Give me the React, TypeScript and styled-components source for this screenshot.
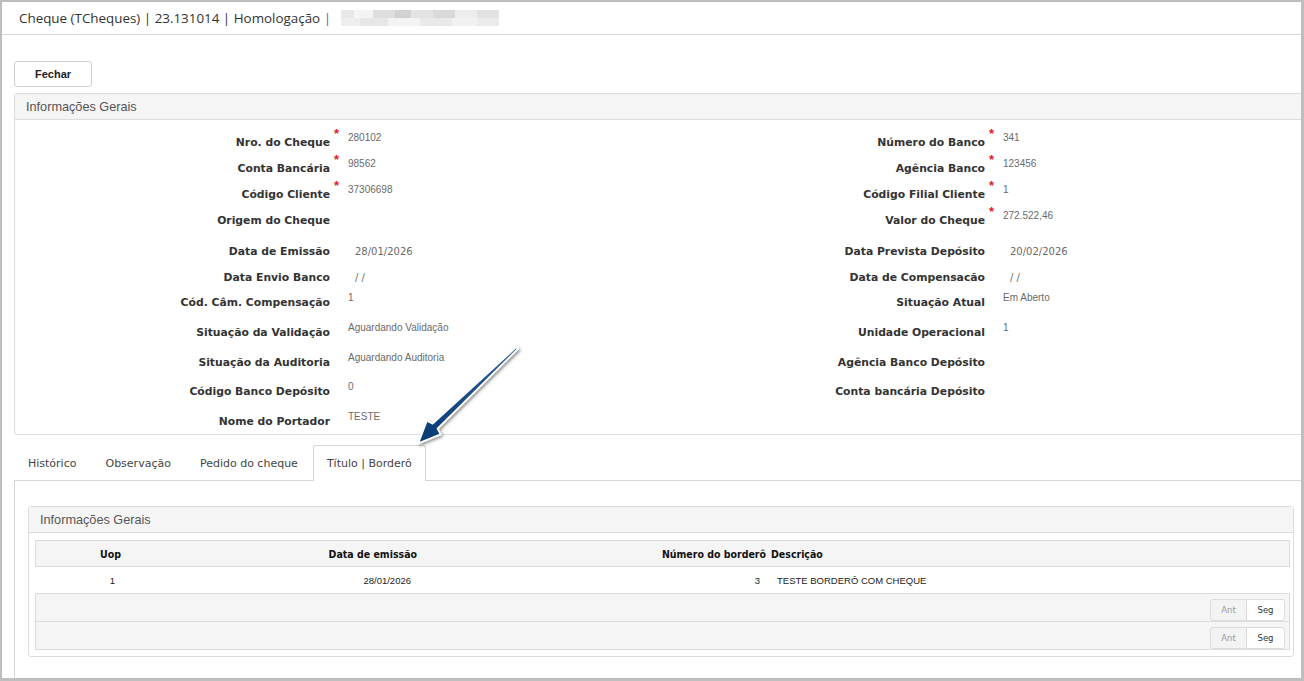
import React from "react";
import styled, { createGlobalStyle } from "styled-components";

const GlobalStyle = createGlobalStyle`
  html, body { margin: 0; padding: 0; background: #fff; }
  body { font-family: "DejaVu Sans", Verdana, sans-serif; }
  * { box-sizing: border-box; }
`;

const Frame = styled.div`
  position: relative;
  width: 1304px;
  height: 681px;
  border: 2px solid #bebebe;
  border-right-width: 3px;
  border-bottom-width: 3px;
  overflow: hidden;
  background: #fff;
`;

const TitleBar = styled.div`
  height: 33px;
  border-bottom: 1px solid #d8d8d8;
  display: flex;
  align-items: center;
  padding-left: 17px;
  font-family: "Open Sans", "Liberation Sans", sans-serif;
  font-size: 13.4px;
  color: #333;
  white-space: pre;
`;

const TitleSep = styled.span`
  color: #3f6fa8;
`;

const Blurred = styled.div`
  width: 158px;
  height: 16px;
  margin-left: 10px;
  background:
    linear-gradient(to right, #e8e8e8 0 8%, #f4f4f4 8% 20%, #dedede 20% 34%, #d2d2d2 34% 44%, #e3e3e3 44% 58%, #d9d9d9 58% 72%, #ededed 72% 86%, #e2e2e2 86% 100%) top / 100% 50% no-repeat,
    linear-gradient(to right, #eeeeee 0 12%, #e7e7e7 12% 30%, #f3f3f3 30% 50%, #e9e9e9 50% 70%, #f1f1f1 70% 86%, #ebebeb 86% 100%) bottom / 100% 50% no-repeat;
  filter: blur(0.7px);
`;

const Toolbar = styled.div`
  padding: 26px 0 0 12px;
  display: flex;
`;

const Button = styled.button`
  width: 78px;
  height: 26px;
  border: 1px solid #cfcfcf;
  border-radius: 3px;
  background: #fff;
  font-family: "Liberation Sans", Arial, sans-serif;
  font-weight: bold;
  font-size: 11px;
  color: #222;
  padding: 0;
`;

const Panel = styled.section<{ $inner?: boolean }>`
  border: 1px solid #dcdcdc;
  border-radius: 3px;
  background: #fff;
  margin: ${(p) => (p.$inner ? "0" : "6px -4px 0 12px")};
`;

const PanelHeader = styled.div`
  height: 26px;
  border-bottom: 1px solid #dcdcdc;
  background: #f5f5f5;
  display: flex;
  align-items: center;
  padding-left: 11px;
  font-family: "Liberation Sans", Arial, sans-serif;
  font-size: 12.7px;
  color: #555;
`;

const FieldsBody = styled.div`
  padding: 4px 0 5px 0;
`;

const FieldRow = styled.div<{ $h: number }>`
  display: grid;
  grid-template-columns: 315px 18px 309px 328px 18px 1fr;
  height: ${(p) => p.$h}px;
`;

const Label = styled.div`
  align-self: end;
  text-align: right;
  line-height: 16px;
  font-family: "DejaVu Sans", Verdana, sans-serif;
  font-weight: bold;
  font-size: 10.8px;
  color: #333;
  white-space: nowrap;
  transform: translateY(1px);
`;

const Req = styled.div`
  align-self: end;
  margin-bottom: 11px;
  padding-left: 4px;
  line-height: 10px;
  height: 10px;
  font-family: "Liberation Sans", Arial, sans-serif;
  font-size: 13px;
  font-weight: bold;
  color: #e01818;
`;

const Value = styled.div<{ $date?: boolean }>`
  align-self: end;
  white-space: nowrap;
  color: #6a6a6a;
  ${(p) =>
    p.$date
      ? `font-family: "DejaVu Sans", Verdana, sans-serif; font-size: 10px; line-height: 16px; padding-left: 7px; transform: translateY(1px);`
      : `font-family: "Liberation Sans", Arial, sans-serif; font-size: 10px; line-height: 12px; margin-bottom: 6px;`}
`;

const TabBar = styled.div`
  display: flex;
  margin: 10px 0 0 12px;
  position: relative;
  z-index: 1;
`;

const Tab = styled.div<{ $active?: boolean }>`
  height: 36px;
  padding: 0 13px 1px;
  margin-right: 1px;
  margin-bottom: -1px;
  display: flex;
  align-items: center;
  border: 1px solid ${(p) => (p.$active ? "#d6d6d6" : "transparent")};
  border-bottom: none;
  border-radius: 3px 3px 0 0;
  background: ${(p) => (p.$active ? "#fff" : "transparent")};
  font-family: "DejaVu Sans", Verdana, sans-serif;
  font-size: 11px;
  color: #444;
  white-space: nowrap;
`;

const TabContent = styled.div`
  margin-left: 12px;
  border-left: 1px solid #d6d6d6;
  border-top: 1px solid #d6d6d6;
  padding: 25px 7px 40px 13px;
`;

const InnerBody = styled.div`
  padding: 7px 3px 6px 6px;
`;

const GridRow = styled.div<{ $head?: boolean }>`
  display: grid;
  grid-template-columns: 87px 296px 349px 1fr;
  height: 27px;
  border: 1px solid ${(p) => (p.$head ? "#dcdcdc" : "transparent")};
  border-bottom: 1px solid #dcdcdc;
  background: ${(p) => (p.$head ? "#f5f5f5" : "#fff")};
  align-items: center;
`;

const HeadCell = styled.div<{ $left?: boolean }>`
  text-align: ${(p) => (p.$left ? "left" : "right")};
  padding: ${(p) => (p.$left ? "0 0 0 3px" : "0 2px 0 0")};
  font-family: "DejaVu Sans Condensed", "DejaVu Sans", sans-serif;
  font-weight: bold;
  font-size: 10.5px;
  color: #111;
  white-space: nowrap;
`;

const Cell = styled.div<{ $left?: boolean }>`
  text-align: ${(p) => (p.$left ? "left" : "right")};
  padding: ${(p) => (p.$left ? "0 0 0 9px" : "0 8px 0 0")};
  font-family: "Liberation Sans", Arial, sans-serif;
  font-size: 9.5px;
  color: #222;
  white-space: nowrap;
`;

const PagerRow = styled.div`
  height: 28px;
  border: 1px solid #dcdcdc;
  border-top: none;
  background: #f5f5f5;
  display: flex;
  justify-content: flex-end;
  align-items: flex-end;
  padding-right: 4px;
`;

const PagerGroup = styled.div`
  display: flex;
  height: 22px;
`;

const PagerBtn = styled.div<{ $disabled?: boolean }>`
  width: ${(p) => (p.$disabled ? 37 : 38)}px;
  height: 22px;
  display: flex;
  align-items: center;
  justify-content: center;
  border: 1px solid #dcdcdc;
  ${(p) => (p.$disabled ? "" : "border-left: none;")}
  border-radius: ${(p) => (p.$disabled ? "3px 0 0 3px" : "0 3px 3px 0")};
  background: ${(p) => (p.$disabled ? "#f3f3f3" : "#fff")};
  color: ${(p) => (p.$disabled ? "#9a9a9a" : "#333")};
  font-family: "DejaVu Sans", Verdana, sans-serif;
  font-size: 8.5px;
`;

const ArrowSvg = styled.svg`
  position: absolute;
  left: 398px;
  top: 333px;
  overflow: visible;
  z-index: 5;
`;

type Side = { label: string; value?: string; req?: boolean; date?: boolean };
type Row = { h: number; l: Side; r?: Side };

const rows: Row[] = [
  { h: 26, l: { label: "Nro. do Cheque", value: "280102", req: true }, r: { label: "Número do Banco", value: "341", req: true } },
  { h: 26, l: { label: "Conta Bancária", value: "98562", req: true }, r: { label: "Agência Banco", value: "123456", req: true } },
  { h: 26, l: { label: "Código Cliente", value: "37306698", req: true }, r: { label: "Código Filial Cliente", value: "1", req: true } },
  { h: 26, l: { label: "Origem do Cheque" }, r: { label: "Valor do Cheque", value: "272.522,46", req: true } },
  { h: 31, l: { label: "Data de Emissão", value: "28/01/2026", date: true }, r: { label: "Data Prevista Depósito", value: "20/02/2026", date: true } },
  { h: 26, l: { label: "Data Envio Banco", value: "/ /", date: true }, r: { label: "Data de Compensacão", value: "/ /", date: true } },
  { h: 25, l: { label: "Cód. Câm. Compensação", value: "1" }, r: { label: "Situação Atual", value: "Em Aberto" } },
  { h: 30, l: { label: "Situação da Validação", value: "Aguardando Validação" }, r: { label: "Unidade Operacional", value: "1" } },
  { h: 30, l: { label: "Situação da Auditoria", value: "Aguardando Auditoria" }, r: { label: "Agência Banco Depósito" } },
  { h: 29, l: { label: "Código Banco Depósito", value: "0" }, r: { label: "Conta bancária Depósito" } },
  { h: 30, l: { label: "Nome do Portador", value: "TESTE" } },
];

const FieldCells: React.FC<{ s?: Side }> = ({ s }) => (
  <>
    <Label>{s?.label ?? ""}</Label>
    {s?.req ? <Req>*</Req> : <div />}
    <Value $date={s?.date}>{s?.value ?? ""}</Value>
  </>
);

const tabs = ["Histórico", "Observação", "Pedido do cheque", "Título | Borderô"];

export default function App() {
  return (
    <>
      <GlobalStyle />
      <Frame>
        <TitleBar>
          <span>Cheque (TCheques) | 23.131014 | Homologação </span>
          <TitleSep>|</TitleSep>
          <Blurred />
        </TitleBar>
        <Toolbar>
          <Button>Fechar</Button>
        </Toolbar>
        <Panel>
          <PanelHeader>Informações Gerais</PanelHeader>
          <FieldsBody>
            {rows.map((r, i) => (
              <FieldRow key={i} $h={r.h}>
                <FieldCells s={r.l} />
                <FieldCells s={r.r} />
              </FieldRow>
            ))}
          </FieldsBody>
        </Panel>
        <TabBar>
          {tabs.map((t, i) => (
            <Tab key={t} $active={i === 3}>
              {t}
            </Tab>
          ))}
        </TabBar>
        <TabContent>
          <Panel $inner>
            <PanelHeader>Informações Gerais</PanelHeader>
            <InnerBody>
              <GridRow $head>
                <HeadCell>Uop</HeadCell>
                <HeadCell>Data de emissão</HeadCell>
                <HeadCell>Número do borderô</HeadCell>
                <HeadCell $left>Descrição</HeadCell>
              </GridRow>
              <GridRow>
                <Cell>1</Cell>
                <Cell>28/01/2026</Cell>
                <Cell>3</Cell>
                <Cell $left>TESTE BORDERÔ COM CHEQUE</Cell>
              </GridRow>
              {[0, 1].map((k) => (
                <PagerRow key={k}>
                  <PagerGroup>
                    <PagerBtn $disabled>Ant</PagerBtn>
                    <PagerBtn>Seg</PagerBtn>
                  </PagerGroup>
                </PagerRow>
              ))}
            </InnerBody>
          </Panel>
        </TabContent>
        <ArrowSvg width="130" height="120" viewBox="0 0 130 120">
          <defs>
            <filter id="sh" x="-30%" y="-30%" width="160%" height="160%">
              <feDropShadow dx="1.5" dy="1.5" stdDeviation="1.5" floodColor="#000" floodOpacity="0.45" />
            </filter>
            <linearGradient id="ag" x1="1" y1="0" x2="0" y2="1">
              <stop offset="0" stopColor="#2a5d99" />
              <stop offset="1" stopColor="#0a3a75" />
            </linearGradient>
          </defs>
          <polygon
            points="116.2,12.1 32.65,88.7 26.9,85.7 18.3,108.3 40.6,99.4 37.55,93.7 117.9,13.9"
            fill="url(#ag)"
            stroke="#fff"
            strokeWidth="1.8"
            strokeLinejoin="round"
            filter="url(#sh)"
          />
        </ArrowSvg>
      </Frame>
    </>
  );
}
